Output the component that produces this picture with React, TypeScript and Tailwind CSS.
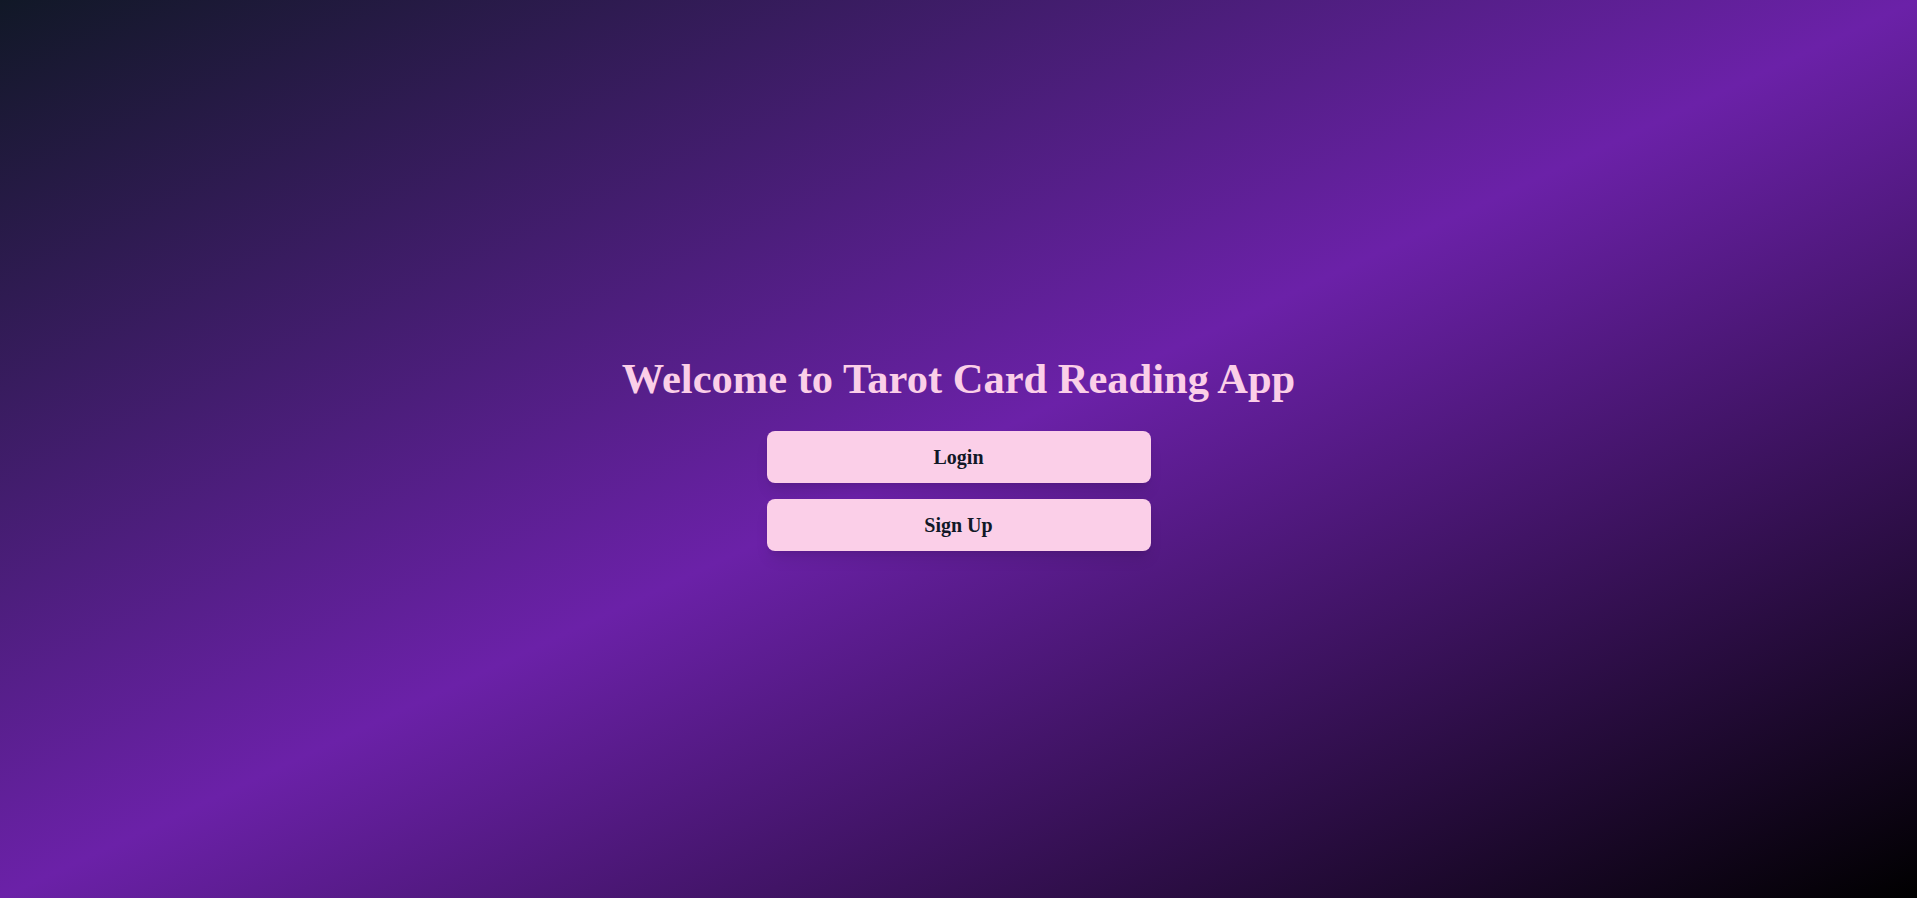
export default function App() {
  return (
    <div
      className="min-h-screen w-full flex flex-col items-center justify-center pt-3 bg-[linear-gradient(to_bottom_right,#111827,#6b21a8,#000000)]"
      style={{ fontFamily: 'Georgia, "Liberation Serif", serif' }}
    >
      <h1 className="text-[42.5px] leading-10 font-bold text-[#fbcfe8] mb-8">Welcome to Tarot Card Reading App</h1>
      <div className="flex flex-col gap-4 w-96">
        <button className="w-full py-3 rounded-lg bg-[#fbcfe8] text-[#111827] text-[20px] leading-7 font-bold shadow-lg">
          Login
        </button>
        <button className="w-full py-3 rounded-lg bg-[#fbcfe8] text-[#111827] text-[20px] leading-7 font-bold shadow-lg">
          Sign Up
        </button>
      </div>
    </div>
  )
}
